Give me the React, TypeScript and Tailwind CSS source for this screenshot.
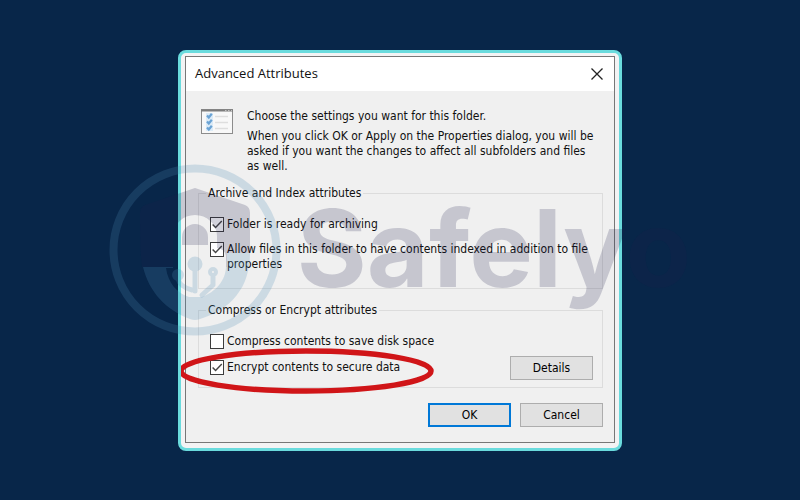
import React, { useState } from 'react';

type CheckProps = {
    id: string;
    label: string;
    defaultChecked?: boolean;
};

const CheckRow = ({ id, label, defaultChecked = false }: CheckProps) => {
    const [checked, setChecked] = useState(defaultChecked);

    return (
        <div className="flex items-start gap-[3px]">
            <span className="relative block h-[15px] w-[14px] shrink-0">
                <input
                    id={id}
                    type="checkbox"
                    checked={checked}
                    onChange={(e) => setChecked(e.target.checked)}
                    className="block h-[15px] w-[14px] appearance-none border border-[#3c3c3c] bg-white"
                />
                {checked && (
                    <svg viewBox="0 0 14 15" className="pointer-events-none absolute inset-0 h-full w-full" fill="none" stroke="#444" strokeWidth="1.4">
                        <path d="M2.6 7.4 L5.6 10.6 L11.8 4" />
                    </svg>
                )}
            </span>
            <label htmlFor={id}>{label}</label>
        </div>
    );
};

const FolderOptionsIcon = () => (
    <svg viewBox="0 0 32 25" className="h-[25px] w-8 shrink-0" fill="none">
        <rect x="0.5" y="0.5" width="31" height="24" fill="#f8f8f8" stroke="#8c8c8c" />
        <path d="M0 1.5 H32" stroke="#7d7d7d" strokeWidth="2" />
        <path d="M24 1.5 H25.5 M27 1.5 H28.5 M30 1.5 H31" stroke="#c4c4c4" />
        <rect x="5" y="4" width="7" height="18" fill="#dcebf7" />
        <g stroke="#6ba3d4" strokeWidth="2.2">
            <path d="M6 6.5 L7.8 8.5 L10.8 4.8" />
            <path d="M6 12.5 L7.8 14.5 L10.8 10.8" />
            <path d="M6 18.5 L7.8 20.5 L10.8 16.8" />
        </g>
        <path d="M14 7.5 H27 M14 13.5 H27 M14 19.5 H27" stroke="#dedede" strokeWidth="1.5" />
    </svg>
);

const ShieldLogo = () => (
    <svg viewBox="0 0 172 172" className="h-[172px] w-[172px] shrink-0" fill="none">
        <mask id="lock" maskUnits="userSpaceOnUse" x="0" y="0" width="172" height="172">
            <rect width="172" height="172" fill="#fff" />
            {/* shackle and body cut out of the shield */}
            <path d="M64 104 V72 A22 21 0 0 1 108 72 V84 Q116 85 117 92 V102 C117 117 106 128 93 133 H80 C68 129 59 119 57 104 Z" fill="#000" />
            <path d="M73 81 V73 A13 13 0 0 1 99 73 V81 Z" fill="#fff" />
        </mask>
        <g mask="url(#lock)">
            <path d="M86 24 L136 41 Q141 43 141 49 V89 H118 V103 H33 C31 88 31 66 31 49 Q31 43 36 41 Z" fill="#1e1e4a" fillOpacity="0.2" />
            <path d="M118 89 H141 C141 123 123 145 91 155 Q86 157 81 155 C57 146 40 128 34 103 H118 Z" fill="#4e8bb4" fillOpacity="0.22" />
        </g>
        <g opacity="0.22" stroke="#4e8bb4" strokeWidth="5" strokeLinecap="round" strokeLinejoin="round">
            <circle cx="86" cy="86" r="81.5" strokeWidth="8" />
            <circle cx="86" cy="100" r="7.5" fill="#4e8bb4" stroke="none" />
            <path d="M86 104 V127" />
            <circle cx="69" cy="111" r="3.5" fill="#4e8bb4" />
            <path d="M69 115 Q71 123 83 126" />
            <circle cx="104" cy="108" r="3" strokeWidth="4" />
            <path d="M104 113 V121 L93 131" />
        </g>
    </svg>
);

const App = () => {
    const buttonClass = 'h-6 w-[83px] border bg-[#e1e1e1] pt-px text-center leading-[15px] text-black';

    return (
        <main className="relative flex min-h-screen items-center justify-center overflow-hidden bg-[#082649] font-['DejaVu_Sans_Condensed','DejaVu_Sans',sans-serif] text-[12px] leading-[15px] text-[#111]">
            <div className="w-full max-w-[444px] rounded-lg border-[3px] border-[#6adbdd] bg-[#f3f3f4] px-1 pt-[3px] pb-[5px]">
                <section role="dialog" aria-labelledby="dialog-title" className="border border-[#777] bg-[#f0f0f0]">

                    {/* ===== TITLE BAR ===== */}
                    <header className="flex h-[34px] items-center justify-between bg-white pr-[11px] pl-[9px]">
                        <h1 id="dialog-title" className="font-['Open_Sans',sans-serif] text-[13px]">Advanced Attributes</h1>
                        <button type="button" aria-label="Close" className="flex h-3 w-3 items-center justify-center">
                            <svg viewBox="0 0 12 12" className="h-3 w-3" fill="none" stroke="#222" strokeWidth="1.3">
                                <path d="M0.5 0.5 L11.5 11.5 M11.5 0.5 L0.5 11.5" />
                            </svg>
                        </button>
                    </header>

                    <form className="pt-[18px] pr-[11px] pb-[15px] pl-3" onSubmit={(e) => e.preventDefault()}>
                        <div className="flex gap-[14px] pr-2 pl-[3px]">
                            <FolderOptionsIcon />
                            <div className="space-y-[5px]">
                                <p>Choose the settings you want for this folder.</p>
                                <p>
                                    When you click OK or Apply on the Properties dialog, you will be asked if you want the changes to affect all subfolders and files as well.
                                </p>
                            </div>
                        </div>

                        {/* ===== ARCHIVE ===== */}
                        <fieldset className="mt-3 border border-[#dcdcdc] pr-2 pb-4 pl-[11px]">
                            <legend className="-ml-1 px-0.5">Archive and Index attributes</legend>
                            <div className="space-y-[10px] pt-4">
                                <CheckRow id="archive" label="Folder is ready for archiving" defaultChecked />
                                <CheckRow id="index" label="Allow files in this folder to have contents indexed in addition to file properties" defaultChecked />
                            </div>
                        </fieldset>

                        {/* ===== ENCRYPT ===== */}
                        <fieldset className="mt-[14px] border border-[#dcdcdc] pr-[9px] pb-[7px] pl-[11px]">
                            <legend className="-ml-1 px-0.5">Compress or Encrypt attributes</legend>
                            <div className="space-y-[7px] pt-4">
                                <CheckRow id="compress" label="Compress contents to save disk space" />
                                <div className="relative flex items-center justify-between">
                                    <CheckRow id="encrypt" label="Encrypt contents to secure data" defaultChecked />
                                    <button type="button" className={`${buttonClass} border-[#adadad]`}>Details</button>
                                    <svg viewBox="0 0 254 46" className="pointer-events-none absolute -top-2 -left-[29px] h-[46px] w-[254px]" fill="none">
                                        <ellipse cx="125" cy="23" rx="125" ry="20" stroke="#d01518" strokeWidth="5.5" />
                                    </svg>
                                </div>
                            </div>
                        </fieldset>

                        <div className="mt-[15px] flex justify-end gap-[9px]">
                            <button type="submit" className={`${buttonClass} border-2 border-[#0078d7]`}>OK</button>
                            <button type="button" className={`${buttonClass} border-[#adadad]`}>Cancel</button>
                        </div>
                    </form>
                </section>
            </div>

            {/* ===== WATERMARK ===== */}
            <div aria-hidden="true" className="pointer-events-none absolute inset-0 flex items-center justify-center gap-4">
                <ShieldLogo />
                <span className="pb-1 font-['Inter',sans-serif] text-[107px] leading-none font-bold text-[#1e1e4a]/20">Safelyo</span>
            </div>
        </main>
    );
};

export default App;
